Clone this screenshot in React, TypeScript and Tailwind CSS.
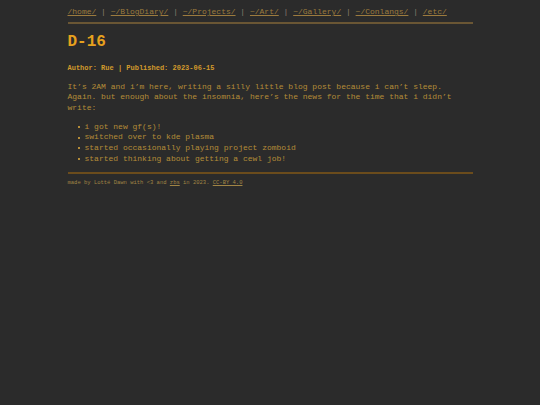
const links = ['/home/', '~/BlogDiary/', '~/Projects/', '~/Art/', '~/Gallery/', '~/Conlangs/', '/etc/'];

const news = [
  'i got new gf(s)!',
  'switched over to kde plasma',
  'started occasionally playing project zomboid',
  'started thinking about getting a cewl job!',
];

export default function App() {
  return (
    <div className="min-h-[405px] w-full bg-[#2b2b2b] font-['Liberation_Mono',monospace] text-[#b48c38]">
      <div className="mx-auto w-[75%]">
        {/* Nav */}
        <nav className="pt-[7px] text-[8px] leading-[10px] whitespace-pre text-[#9c7b3e]">
          {links.map((l, i) => (
            <span key={l}>
              {i > 0 && <span className="text-[#8a8070]"> | </span>}
              <a href="#" className="underline">{l}</a>
            </span>
          ))}
        </nav>
        <hr className="mt-[5px] border-0 border-t-2 border-[#6a5634]" />

        {/* Post */}
        <h1 className="mt-[8px] text-[16px] leading-[20px] font-bold text-[#e6a11e]">D-16</h1>
        <p className="mt-[11px] text-[7px] leading-[10px] font-bold text-[#d29a2c]">
          Author: Rue | Published: 2023-06-15
        </p>
        <p className="mt-[8.5px] text-[8px] leading-[10.7px]">
          It’s 2AM and i’m here, writing a silly little blog post because i can’t sleep. Again. but enough about the insomnia, here’s the news for the time that i didn’t write:
        </p>
        <ul className="mt-[8px] pl-[10px] text-[8px] leading-[10.7px]">
          {news.map(n => (
            <li key={n} className="flex items-center">
              <span className="flex w-[7px] shrink-0 items-center">
                <span className="h-[2px] w-[2px] bg-[#b48c38]" />
              </span>
              <span>{n}</span>
            </li>
          ))}
        </ul>

        {/* Footer */}
        <hr className="mt-[7.5px] border-0 border-t-2 border-[#6b4c1c]" />
        <footer className="mt-[5px] text-[5.5px] leading-[8px] text-[#a08444]">
          made by Lotté Dawn with &lt;3 and <a href="#" className="underline">zbs</a> in 2023. <a href="#" className="underline">CC-BY 4.0</a>
        </footer>
      </div>
    </div>
  );
}
